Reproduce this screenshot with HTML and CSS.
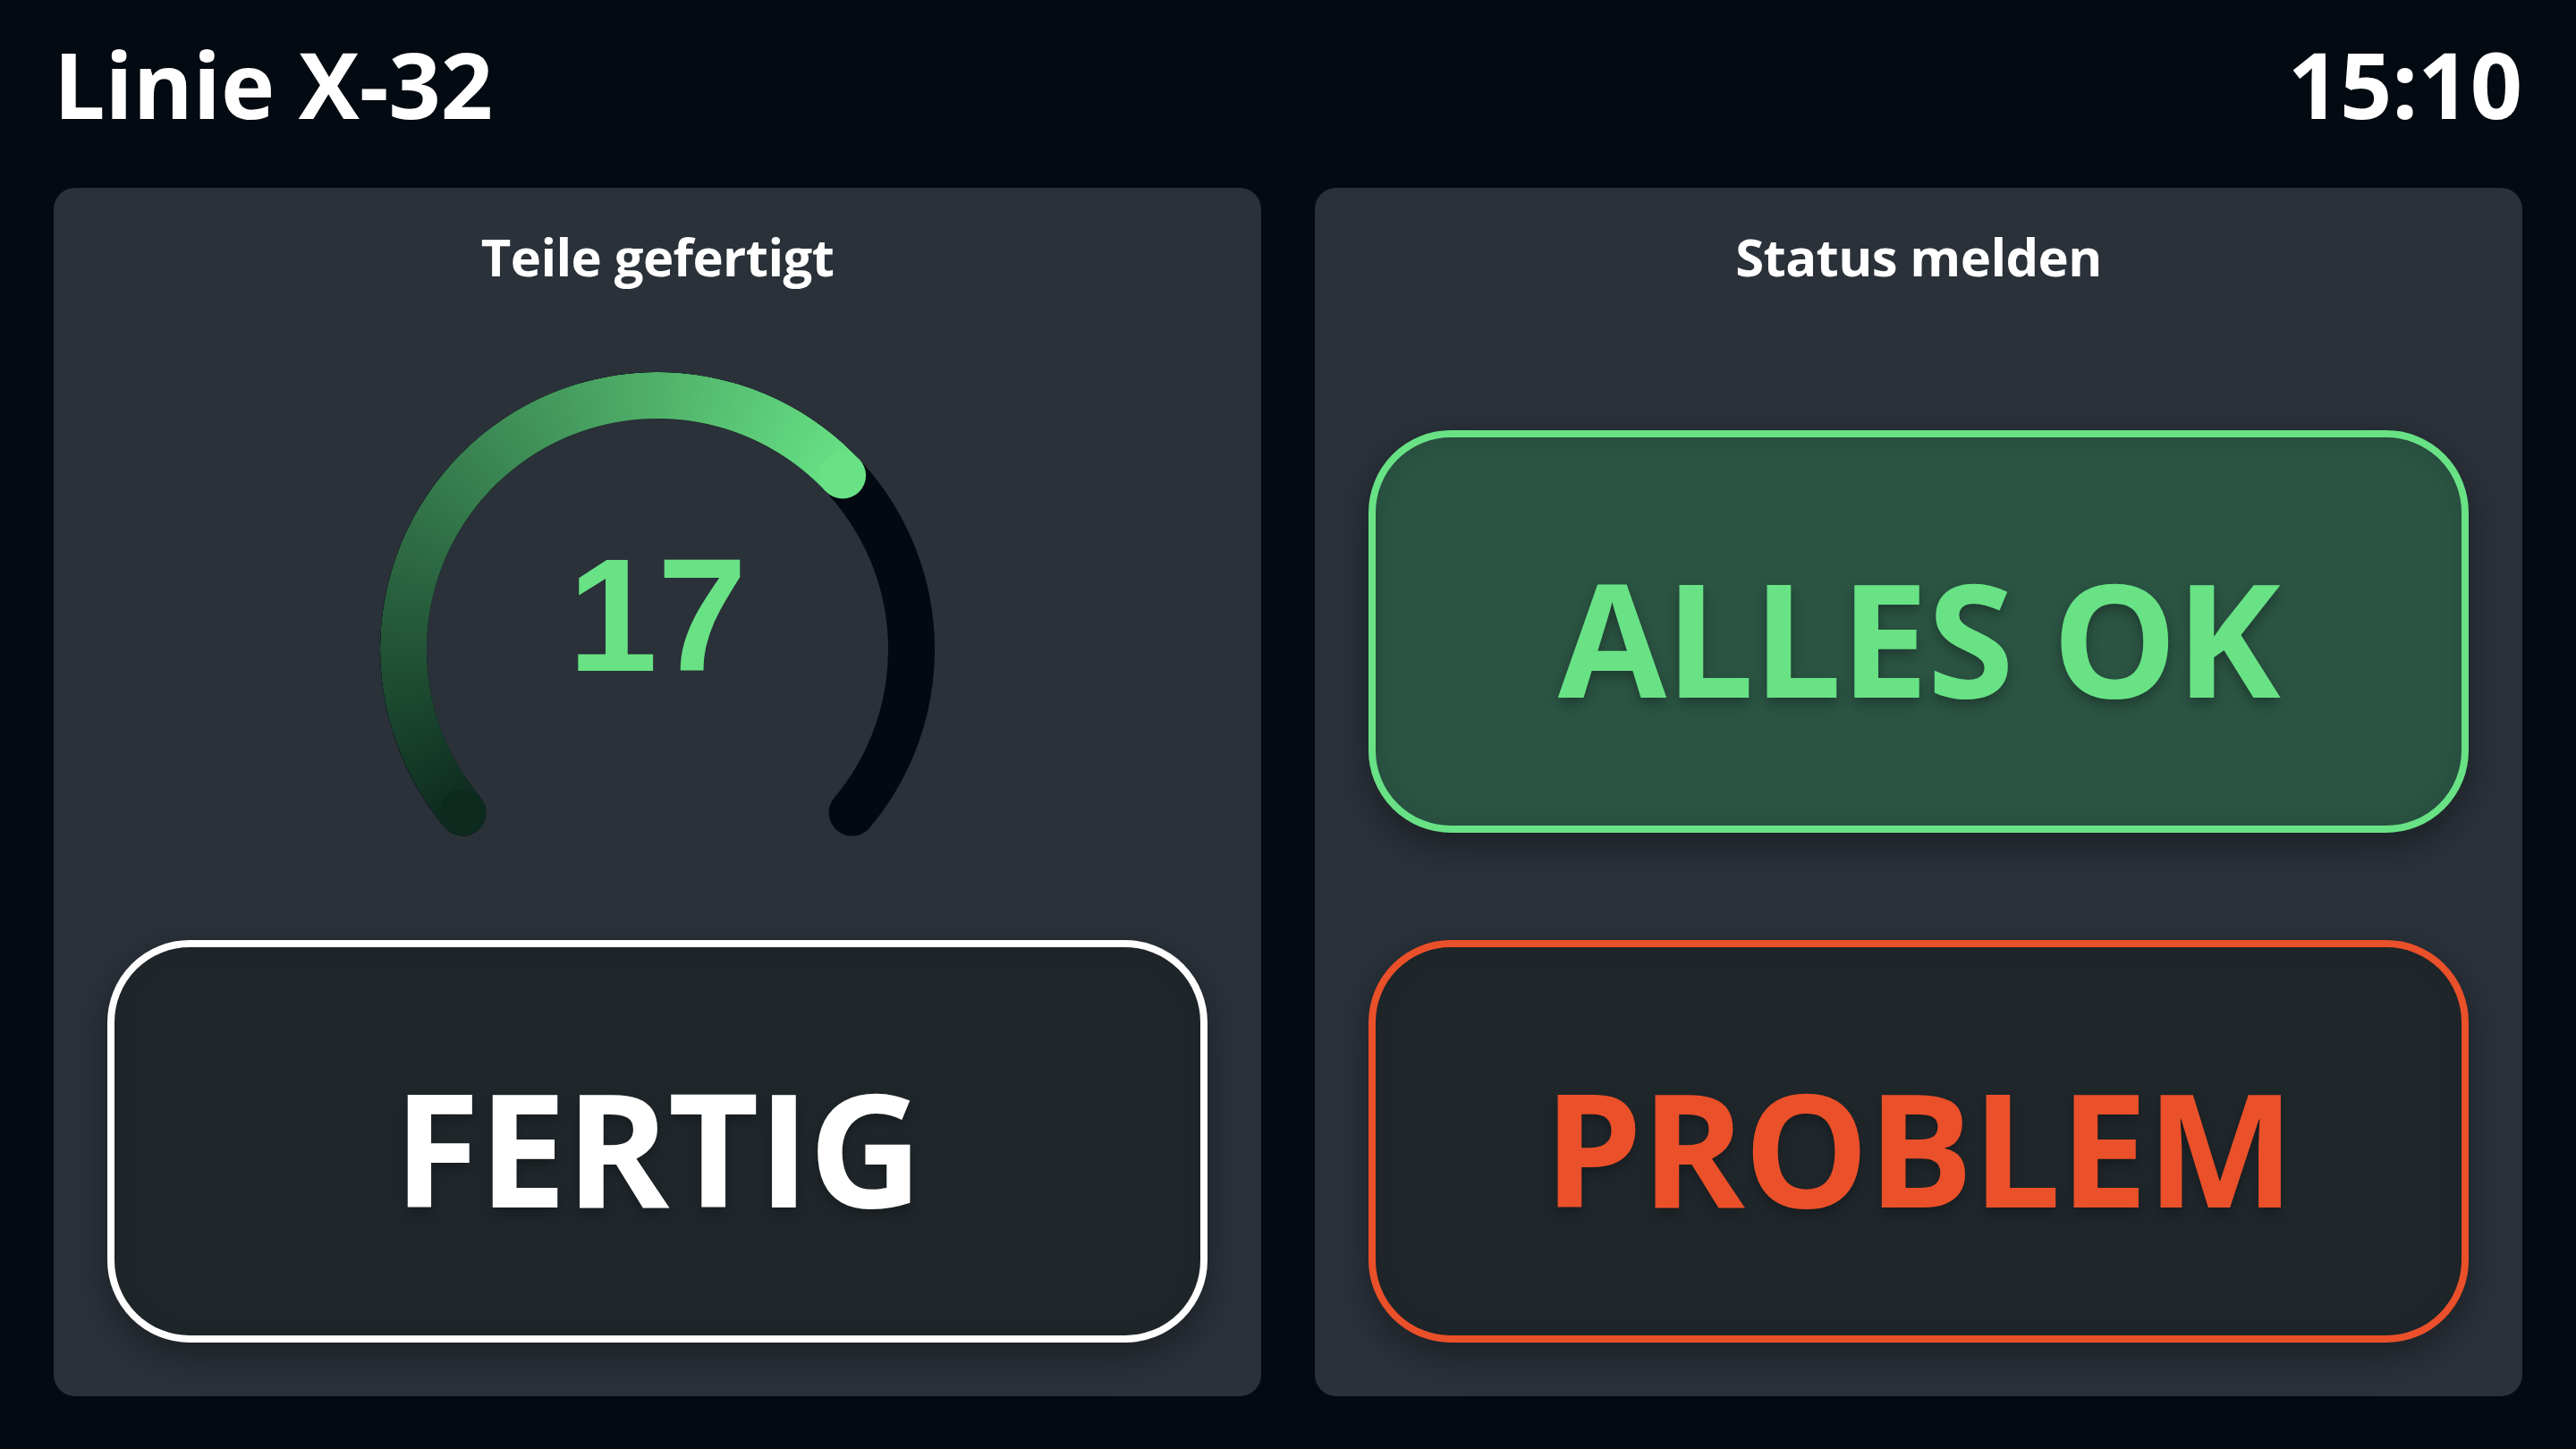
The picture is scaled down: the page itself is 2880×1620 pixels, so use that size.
FILE: index.html
```html
<!DOCTYPE html>
<html lang="de">
<head>
<meta charset="utf-8">
<title>Linie X-32</title>
<link rel="stylesheet" href="styles.css">
</head>
<body>
<div class="app">
  <header class="topbar">
    <h1 class="line-name">Linie X-32</h1>
    <div class="clock">15:10</div>
  </header>
  <main class="panels">
    <section class="card card-count">
      <h2 class="card-title">Teile gefertigt</h2>
      <div class="gauge">
        <svg class="gauge-track" viewBox="0 0 620 620" width="620" height="620">
          <path d="M 92.4 492.6 A 284 284 0 1 1 527.6 492.6" fill="none" stroke="#020910" stroke-width="52" stroke-linecap="round"/>
        </svg>
        <div class="gauge-fill"></div>
        <svg class="gauge-caps" viewBox="0 0 620 620" width="620" height="620">
          <circle cx="92.4" cy="492.6" r="26" fill="#0d2a1f"/>
          <circle cx="517.1" cy="115.6" r="26" fill="#68e285"/>
        </svg>
        <div class="gauge-value">17</div>
      </div>
      <button class="btn btn-done">FERTIG</button>
    </section>
    <section class="card card-status">
      <h2 class="card-title">Status melden</h2>
      <button class="btn btn-ok">ALLES OK</button>
      <button class="btn btn-problem">PROBLEM</button>
    </section>
  </main>
</div>
</body>
</html>
```
FILE: styles.css
```css
html, body {
  margin: 0;
  padding: 0;
  background: #030a11;
}
body {
  width: 2880px;
  height: 1620px;
  overflow: hidden;
  font-family: "Open Sans", "Noto Sans", sans-serif;
  color: #ffffff;
}
.app {
  box-sizing: border-box;
  width: 2880px;
  height: 1620px;
  padding: 40px 60px 60px;
  display: flex;
  flex-direction: column;
  gap: 62px;
}
.topbar {
  height: 108px;
  display: flex;
  justify-content: space-between;
  align-items: center;
}
.line-name, .clock {
  margin: 0;
  font-size: 102px;
  line-height: 108px;
  font-weight: 700;
  letter-spacing: 0;
}
.panels {
  flex: 1;
  display: grid;
  grid-template-columns: 1fr 1fr;
  gap: 60px;
  min-height: 0;
}
.card {
  box-sizing: border-box;
  background: #2a3139;
  border-radius: 24px;
  padding: 41px 60px 60px;
  display: flex;
  flex-direction: column;
  align-items: stretch;
}
.card-title {
  margin: 0;
  text-align: center;
  font-size: 58px;
  line-height: 72px;
  font-weight: 700;
  letter-spacing: -0.6px;
}
.gauge {
  position: relative;
  width: 620px;
  height: 620px;
  margin: 93px auto 0;
}
.gauge-track, .gauge-caps {
  position: absolute;
  left: 0;
  top: 0;
}
.gauge-fill {
  position: absolute;
  inset: 0;
  border-radius: 50%;
  background: conic-gradient(from -130deg, #0d2a1f 0deg, #68e285 176.8deg, transparent 176.8deg);
  -webkit-mask: radial-gradient(circle closest-side, transparent 257.5px, #000 258.5px, #000 309.5px, transparent 310.5px);
  mask: radial-gradient(circle closest-side, transparent 257.5px, #000 258.5px, #000 309.5px, transparent 310.5px);
}
.gauge-value {
  position: absolute;
  left: 0;
  right: 0;
  top: 182px;
  text-align: center;
  font-family: "Liberation Sans", Arial, sans-serif;
  font-weight: 700;
  font-size: 180px;
  line-height: 180px;
  color: #68e285;
}
.btn {
  box-sizing: border-box;
  height: 450px;
  width: 100%;
  border: 8px solid #ffffff;
  border-radius: 92px;
  background: #20272b;
  color: #ffffff;
  font-family: "Open Sans", "Noto Sans", sans-serif;
  font-weight: 700;
  font-size: 176px;
  line-height: 176px;
  letter-spacing: -1.5px;
  padding: 12px 0 0;
  display: flex;
  align-items: center;
  justify-content: center;
  box-shadow: 0 14px 40px rgba(0, 0, 0, 0.35), inset 0 0 24px rgba(0, 0, 0, 0.12);
  text-shadow: 0 6px 14px rgba(0, 0, 0, 0.3);
  cursor: pointer;
}
.btn-done {
  margin-top: auto;
}
.btn-ok {
  margin-top: 158px;
  background: #2b5443;
  border-color: #68e285;
  color: #68e285;
}
.btn-problem {
  margin-top: 120px;
  border-color: #ea5029;
  color: #ea5029;
}
```
